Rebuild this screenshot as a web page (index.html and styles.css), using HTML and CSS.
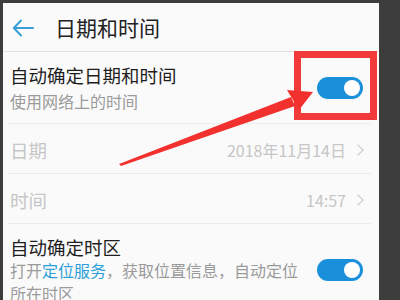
FILE: index.html
```html
<!DOCTYPE html>
<html lang="zh">
<head>
<meta charset="utf-8">
<link rel="stylesheet" href="styles.css">
</head>
<body>
<div class="screen">
  <div class="header">
    <svg class="back" width="22" height="18" viewBox="0 0 22 18"><path d="M21 9H2M9 1.5L1.8 9L9 16.5" fill="none" stroke="#3a9fd6" stroke-width="2" stroke-linecap="round" stroke-linejoin="round"/></svg>
    <div class="title">日期和时间</div>
  </div>
  <div class="row tall">
    <div class="texts">
      <div class="label">自动确定日期和时间</div>
      <div class="sub">使用网络上的时间</div>
    </div>
    <div class="toggle"><span class="knob"></span></div>
  </div>
  <div class="row plain">
    <div class="label dim">日期</div>
    <div class="value">2018年11月14日<span class="chev"></span></div>
  </div>
  <div class="row plain">
    <div class="label dim">时间</div>
    <div class="value">14:57<span class="chev"></span></div>
  </div>
  <div class="row last">
    <div class="texts">
      <div class="label">自动确定时区</div>
      <div class="sub">打开<span class="link">定位服务</span>，获取位置信息，自动定位所在时区</div>
    </div>
    <div class="toggle"><span class="knob"></span></div>
  </div>
</div>
<div class="redbox"></div>
<svg class="arrow" width="400" height="300" viewBox="0 0 400 300">
  <polygon points="119,164 291,97 295,106 121,166" fill="#f2312e"/>
  <polygon points="287,90 313,92 299,110" fill="#f2312e"/>
</svg>
</body>
</html>
```
FILE: styles.css
```css
html, body {
  margin: 0;
  padding: 0;
}
body {
  background: #3d3d3d;
  width: 400px;
  height: 300px;
  overflow: hidden;
  position: relative;
  font-family: "Noto Sans CJK SC", "Noto Sans", sans-serif;
}
.screen {
  margin: 3px 0 0 3px;
  width: 376px;
  height: 297px;
  background: #fafafa;
  overflow: hidden;
}
.header {
  height: 48px;
  display: flex;
  align-items: center;
  border-bottom: 1px solid #e2e2e2;
}
.back {
  margin-left: 9px;
  margin-top: 1px;
}
.title {
  margin-left: 21px;
  font-size: 21px;
  line-height: 28px;
  color: #222;
}
.row {
  display: flex;
  align-items: center;
  margin-left: 5px;
  margin-right: 8px;
  padding-left: 2px;
  border-bottom: 1px solid #ececec;
  box-sizing: border-box;
}
.tall {
  height: 72px;
  padding-top: 1px;
}
.plain {
  height: 50px;
  padding-top: 2px;
}
.last {
  border-bottom: none;
  padding-top: 11px;
  align-items: flex-start;
}
.texts {
  flex: 1;
  min-width: 0;
}
.label {
  font-size: 18.5px;
  line-height: 24px;
  color: #1e1e1e;
}
.label.dim {
  color: #c6c6c6;
  flex: 1;
}
.tall .sub {
  margin-top: 3px;
}
.sub {
  font-size: 16px;
  line-height: 23px;
  color: #9a9a9a;
}
.last .texts {
  flex: 0 1 292px;
}
.link {
  color: #2b9fd8;
}
.value {
  display: flex;
  align-items: center;
  font-size: 16px;
  color: #c6c6c6;
  margin-right: 9px;
}
.chev {
  display: inline-block;
  width: 7px;
  height: 7px;
  border-top: 1.5px solid #c6c6c6;
  border-right: 1.5px solid #c6c6c6;
  transform: rotate(45deg);
  margin-left: 8px;
}
.toggle {
  width: 46px;
  height: 22px;
  border-radius: 11px;
  background: #1a8fda;
  position: relative;
  margin-right: 8px;
  margin-left: auto;
  flex: none;
}
.last .toggle {
  margin-top: 24px;
}
.knob {
  position: absolute;
  right: 3px;
  top: 3px;
  width: 16px;
  height: 16px;
  border-radius: 50%;
  background: #fff;
}
.redbox {
  position: absolute;
  left: 294px;
  top: 51px;
  width: 69px;
  height: 55px;
  border: 7px solid #f23a3a;
}
.arrow {
  position: absolute;
  left: 0;
  top: 0;
}
```
